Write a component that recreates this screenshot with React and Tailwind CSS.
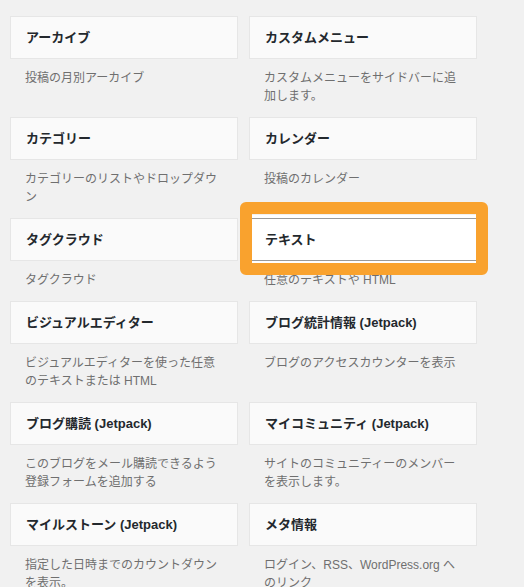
import React from 'react';

const widgets = [
  { title: 'アーカイブ', desc: ['投稿の月別アーカイブ'] },
  { title: 'カスタムメニュー', desc: ['カスタムメニューをサイドバーに追', '加します。'] },
  { title: 'カテゴリー', desc: ['カテゴリーのリストやドロップダウ', 'ン'] },
  { title: 'カレンダー', desc: ['投稿のカレンダー'] },
  { title: 'タグクラウド', desc: ['タグクラウド'] },
  { title: 'テキスト', desc: ['任意のテキストや HTML'], selected: true },
  { title: 'ビジュアルエディター', desc: ['ビジュアルエディターを使った任意', 'のテキストまたは HTML'] },
  { title: 'ブログ統計情報 (Jetpack)', desc: ['ブログのアクセスカウンターを表示'] },
  { title: 'ブログ購読 (Jetpack)', desc: ['このブログをメール購読できるよう', '登録フォームを追加する'] },
  { title: 'マイコミュニティ (Jetpack)', desc: ['サイトのコミュニティーのメンバー', 'を表示します。'] },
  { title: 'マイルストーン (Jetpack)', desc: ['指定した日時までのカウントダウン', 'を表示。'] },
  { title: 'メタ情報', desc: ['ログイン、RSS、WordPress.org へ', 'のリンク'] },
];

function Widget({ title, desc, selected }) {
  return (
    <div className="mb-[12px]">
      <div className="relative">
        <div
          className={
            'h-[43px] flex items-center px-[15px] bg-[#fafafa] border ' +
            (selected
              ? 'border-x-[#e5e5e5] border-y-[#9a9a9a] bg-white shadow-[0_-3px_0_#fff,0_2px_0_#fff]'
              : 'border-[#e6e6e6]')
          }
        >
          <span className="text-[13px] font-bold text-[#23282d] whitespace-nowrap">{title}</span>
        </div>
        {selected && (
          <div className="absolute -left-[9px] -right-[11px] -top-[16px] -bottom-[14px] border-[12px] border-[#f9a22e] rounded-[6px] pointer-events-none" />
        )}
      </div>
      <div className="mt-[10px] px-[15px] text-[12px] leading-[18px] text-[#6f6f6f]">
        {desc.map((line, i) => (
          <div key={i} className="whitespace-nowrap">{line}</div>
        ))}
      </div>
    </div>
  );
}

export default function App() {
  return (
    <div className="w-[524px] h-[587px] overflow-hidden bg-[#f1f1f1] font-['Liberation_Sans','Noto_Sans_CJK_JP',sans-serif]">
      <div className="-mt-[14px] h-[18px] mb-[12px] pl-[25px] text-[12px] leading-[18px] text-[#6f6f6f]">
        最近の投稿の一覧を表示します
      </div>
      <div className="grid grid-cols-[228px_228px] gap-x-[11px] pl-[10px]">
        {widgets.map((w, i) => (
          <Widget key={i} {...w} />
        ))}
      </div>
    </div>
  );
}
